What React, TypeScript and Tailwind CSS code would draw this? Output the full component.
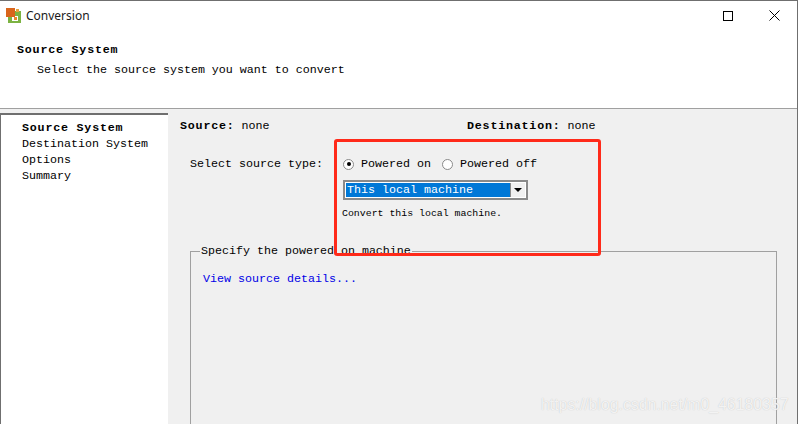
const mono = "font-['Liberation_Mono',monospace] text-[11.67px] leading-4";
const bold = "font-bold tracking-[0.8px]";

const AppIcon = () => (
  <svg width="15" height="15" viewBox="0 0 15 15">
    <rect x="2" y="3" width="13" height="12" fill="#7cb342" />
    <rect x="6" y="8" width="6" height="5" fill="#ffffff" />
    <rect x="8" y="9" width="3" height="3" fill="#e8892b" />
    <rect x="0" y="0" width="9" height="9" fill="#d9651c" />
    <rect x="10" y="1" width="3" height="3" fill="#e8a33d" />
  </svg>
);

const Radio = ({ checked }: { checked?: boolean }) => (
  <span className="flex h-[11px] w-[11px] items-center justify-center rounded-full border border-[#8a8a8a] bg-white">
    {checked && <span className="h-[4px] w-[4px] rounded-full bg-black" />}
  </span>
);

const App = () => {
  return (
    <div className="relative h-[424px] w-[799px] overflow-hidden bg-white text-black">
      <div className="flex h-full w-[798px] flex-col border-t border-r border-[#6f6f6f]">
        {/* title bar */}
        <div className="flex h-[29px] shrink-0 items-center pl-[6px]">
          <AppIcon />
          <span className="ml-[5px] font-['Noto_Sans',sans-serif] text-[12px] text-[#1a1a1a]">
            Conversion
          </span>
          <div className="ml-auto flex items-center">
            <svg width="10" height="10" viewBox="0 0 10 10" className="mr-[36px]">
              <rect x="0.5" y="0.5" width="9" height="9" fill="none" stroke="#000" />
            </svg>
            <svg width="11" height="11" viewBox="0 0 11 11" className="mr-[17px]">
              <path d="M0.5 0.5L10.5 10.5M10.5 0.5L0.5 10.5" stroke="#000" fill="none" />
            </svg>
          </div>
        </div>

        {/* page header */}
        <div className="h-[79px] shrink-0 border-b border-[#a0a0a0] pt-[12px] pl-[17px]">
          <div className={`${mono} ${bold}`}>Source System</div>
          <div className={`${mono} mt-1 pl-5`}>Select the source system you want to convert</div>
        </div>

        <div className="flex min-h-0 flex-1 bg-[#f0f0f0] pt-[4px]">
          {/* steps */}
          <div className="w-[168px] shrink-0 border-t-2 border-l border-[#6f6f6f] bg-white pt-[5px] pl-[21px]">
            <div className={`${mono} ${bold}`}>Source System</div>
            <div className={mono}>Destination System</div>
            <div className={mono}>Options</div>
            <div className={mono}>Summary</div>
          </div>

          {/* main pane */}
          <div className="min-w-0 flex-1 pt-[5px] pl-[12px]">
            <div className="flex">
              <div className={`${mono} w-[287px]`}>
                <b className={bold}>Source:</b> none
              </div>
              <div className={mono}>
                <b className={bold}>Destination:</b> none
              </div>
            </div>

            <div className="mt-[22px] flex pl-[10px]">
              <div className={`${mono} w-[153px]`}>Select source type:</div>
              <div>
                <div className="flex items-center">
                  <Radio checked />
                  <span className={`${mono} ml-[7px] w-[81px]`}>Powered on</span>
                  <Radio />
                  <span className={`${mono} ml-[7px]`}>Powered off</span>
                </div>
                <div className="mt-[8px] flex h-[20px] w-[185px] items-center border-2 border-[#8a8a8a] bg-white p-px">
                  <div className={`${mono} h-full flex-1 bg-[#0078d7] pl-px leading-[15px] text-white`}>
                    This local machine
                  </div>
                  <div className="flex h-full w-[15px] items-center justify-center border-l border-[#8a8a8a] bg-[#f0f0f0]">
                    <span className="h-0 w-0 border-x-[4px] border-t-[4px] border-x-transparent border-t-black" />
                  </div>
                </div>
                <div className="mt-[6px] -ml-px font-['Liberation_Mono',monospace] text-[9.9px] leading-4">
                  Convert this local machine.
                </div>
              </div>
            </div>

            <fieldset className="mt-[21px] ml-[10px] h-[300px] w-[587px] border border-[#a0a0a0]">
              <legend className={`${mono} ml-[9px] px-px`}>Specify the powered on machine</legend>
              <a className={`${mono} mt-[12px] ml-[12px] block text-[#0000e6]`}>View source details...</a>
            </fieldset>
          </div>
        </div>
      </div>

      {/* annotation */}
      <div className="absolute top-[139px] left-[334px] h-[117px] w-[267px] rounded-[3px] border-[3px] border-[#ff2a1a]" />

      {/* watermark */}
      <div className="absolute top-[396px] left-[541px] font-['Liberation_Sans',sans-serif] text-[15.85px] leading-[18px] text-white/80 [text-shadow:0_0_1px_#b8b8b8]">
        https://blog.csdn.net/m0_46180357
      </div>
    </div>
  );
};

export default App;
